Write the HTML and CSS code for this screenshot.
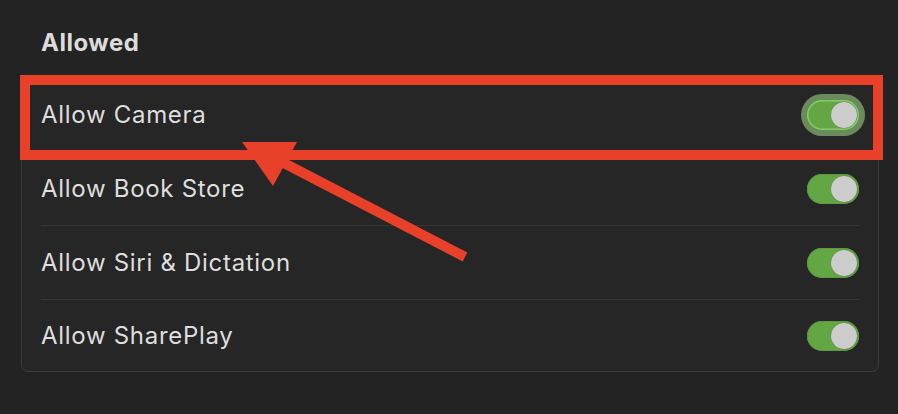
FILE: index.html
```html
<!DOCTYPE html>
<html>
<head>
<meta charset="utf-8">
<link rel="stylesheet" href="styles.css">
</head>
<body>
<div class="page">
  <h2 class="title">Allowed</h2>
  <div class="card">
    <div class="row">
      <span class="label">Allow Camera</span>
      <span class="toggle focused"><span class="knob"></span></span>
    </div>
    <div class="row">
      <span class="label">Allow Book Store</span>
      <span class="toggle"><span class="knob"></span></span>
    </div>
    <div class="row">
      <span class="label">Allow Siri &amp; Dictation</span>
      <span class="toggle"><span class="knob"></span></span>
    </div>
    <div class="row">
      <span class="label">Allow SharePlay</span>
      <span class="toggle"><span class="knob"></span></span>
    </div>
  </div>
  <div class="highlight"></div>
  <svg class="arrow" width="898" height="414" viewBox="0 0 898 414">
    <line x1="465" y1="257" x2="280" y2="161" stroke="#e9402a" stroke-width="10"/>
    <polygon points="242,142 297,142 273,186" fill="#e9402a"/>
  </svg>
</div>
</body>
</html>
```

FILE: styles.css
```css
html, body {
  margin: 0;
  padding: 0;
  background: #232323;
}
.page {
  position: relative;
  width: 898px;
  height: 414px;
  overflow: hidden;
  padding: 26px 19px 0 21px;
  box-sizing: border-box;
  font-family: Inter, "Noto Sans", sans-serif;
}
.title {
  margin: 0 0 0 20px;
  height: 51px;
  font-size: 24px;
  line-height: 34px;
  font-weight: 700;
  letter-spacing: 0.5px;
  color: #dcdcdc;
}
.card {
  background: #262626;
  border: 1px solid #3b3b3b;
  border-radius: 7px;
  padding: 0 18px 0 19px;
}
.row {
  display: flex;
  align-items: center;
  justify-content: space-between;
  height: 73px;
  border-bottom: 1px solid #343434;
}
.row:last-child {
  border-bottom: none;
  height: 71px;
}
.label {
  font-size: 24px;
  line-height: 30px;
  padding-top: 1px;
  color: #dedede;
  letter-spacing: 0.7px;
}
.toggle {
  position: relative;
  width: 52px;
  height: 30px;
  border-radius: 15px;
  background: #63a744;
  box-shadow: inset 0 0 0 1px #5b9a3e;
  flex: none;
  margin-right: 1px;
}
.toggle.focused {
  box-shadow: inset 0 0 0 1.5px #86cc64, 0 0 0 6px #6b8b5e;
}
.knob {
  position: absolute;
  right: 2px;
  top: 2px;
  width: 26px;
  height: 26px;
  border-radius: 50%;
  background: #cdcdcd;
  box-shadow: 0 0 1px rgba(0,0,0,0.4);
}
.highlight {
  position: absolute;
  left: 20px;
  top: 75px;
  width: 863px;
  height: 85px;
  box-sizing: border-box;
  border: 10px solid #e9402a;
}
.arrow {
  position: absolute;
  left: 0;
  top: 0;
}
```
